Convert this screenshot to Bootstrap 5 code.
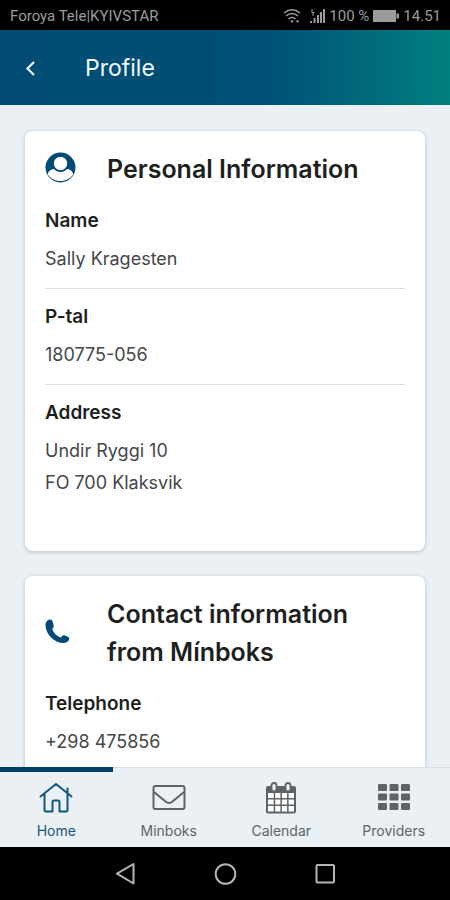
<!DOCTYPE html>
<html lang="en">
<head>
<meta charset="utf-8">
<meta name="viewport" content="width=device-width, initial-scale=1">
<title>Profile</title>
<link rel="stylesheet" href="https://cdn.jsdelivr.net/npm/bootstrap@5.3.0/dist/css/bootstrap.min.css">
<style>
  body { font-family: Inter, "Noto Sans", sans-serif; font-size: 18px; line-height: 32px; color: #444648; background: #ebf0f4; }
  svg { display: block; flex: none; }
  .status-bar { background: #000; color: #9b9b9b; font: 15px/20px Roboto, sans-serif; padding: 6px 9px 4px 10px; }
  .app-header { background: linear-gradient(90deg, #004c74 0%, #004f76 58%, #007f80 100%); color: #f2f8fa; padding: 19px 20px 18px; gap: 44px; }
  .app-header h1 { font-size: 23px; line-height: 38px; }
  .content { padding: 26px 25px 25px; gap: 25px; }
  .info-card { border: 0; border-radius: 8px; padding: 19px 20px 52px; box-shadow: 0 1px 4px rgba(40, 70, 90, .28); color: inherit; }
  .card-head { margin-bottom: 17px; }
  .head-icon { width: 62px; padding-bottom: 4px; color: #004a75; }
  h2, dt { color: #1d1f21; }
  .card-head h2 { font-size: 25px; line-height: 38px; font-weight: 600; }
  .field dt { font-size: 19px; font-weight: 600; margin-bottom: 6px; }
  .field + .field { border-top: 1px solid #dadee1; margin-top: 13px; padding-top: 12px; }
  .tab-bar { background: #ebf0f4; border-top: 1px solid #d8dee3; }
  .tab-link { color: #606366; font-size: 14px; line-height: 20px; padding: 10px 0 8px; gap: 5px; border-top: 5px solid transparent; margin-top: -1px; height: 80px; }
  .tab-link.current { color: #14577e; border-top-color: #003f69; }
  .system-bar { background: #000; color: #b5b5b5; padding: 13px 0 13px; gap: 73px; }
</style>
<script defer src="https://cdn.jsdelivr.net/npm/bootstrap@5.3.0/dist/js/bootstrap.bundle.min.js"></script>
</head>
<body class="d-flex flex-column vh-100 overflow-hidden">
  <div class="status-bar d-flex align-items-center">
    <span class="me-auto">Foroya Tele|KYIVSTAR</span>
    <svg class="me-2" width="18" height="16" viewBox="0 0 18 16" fill="none" stroke="currentColor" stroke-width="1.5" aria-hidden="true"><path d="M1 5Q9-1.500 17 5M3 8Q9 3 15 8M5.500 11Q9 8 12.500 11"/><path d="M7 12.500h4l-2 2.500zM12.500 12.500h4l-2 2.500z" fill="currentColor" stroke="none"/></svg>
    <svg width="16" height="16" viewBox="0 0 16 16" fill="currentColor" aria-hidden="true"><path d="M1 13h2v2H1zM4.500 10h2v5h-2zM8 7h2v8H8zM11 4h2v11h-2zM14 1h2v14h-2zM2.500 1h1v3h2v1h-1v3h-1V5h-1z"/></svg>
    <span class="ms-1">100 %</span>
    <svg class="mx-1" width="26" height="14" viewBox="0 0 26 14" aria-hidden="true"><path d="M0 1h23v12H0zM23.500 4.500H26v5h-2.500z" fill="currentColor"/></svg>
    <span>14.51</span>
  </div>

  <header class="app-header d-flex align-items-center">
    <button type="button" class="btn p-0 border-0 text-reset" aria-label="Back">
      <svg width="21" height="24" viewBox="0 0 21 24" fill="none" stroke="currentColor" stroke-width="2.200"><path d="M14 6L7.500 12.500l6.500 6.500"/></svg>
    </button>
    <h1 class="m-0 fw-normal">Profile</h1>
  </header>

  <main class="content d-flex flex-column flex-fill overflow-auto">
    <section class="info-card card flex-shrink-0">
      <div class="card-head d-flex align-items-center">
        <div class="head-icon flex-shrink-0">
          <svg width="31" height="31" viewBox="0 0 31 31" aria-hidden="true"><circle cx="15.500" cy="15.500" r="15" fill="currentColor"/><path d="M9 17C5 17.500 3 20 2.800 22.500c3 4.200 7.200 6.500 12.700 6.500s9.700-2.300 12.700-6.500C28 20 26 17.500 22 17c-4 4-9 4-13 0z" fill="#fff"/><circle cx="15.500" cy="11.500" r="7.500" fill="#fff" stroke="currentColor" stroke-width="1.500"/></svg>
        </div>
        <h2 class="m-0">Personal Information</h2>
      </div>
      <dl class="m-0">
        <div class="field"><dt>Name</dt><dd class="m-0">Sally Kragesten</dd></div>
        <div class="field"><dt>P-tal</dt><dd class="m-0">180775-056</dd></div>
        <div class="field"><dt>Address</dt><dd class="m-0">Undir Ryggi 10<br>FO 700 Klaksvik</dd></div>
      </dl>
    </section>

    <section class="info-card card flex-shrink-0">
      <div class="card-head d-flex align-items-center">
        <div class="head-icon flex-shrink-0">
          <svg width="25" height="25" viewBox="0 0 25 25" fill="currentColor" aria-hidden="true"><path d="M4.500.5C2 1.200.5 3.200.5 6.200.8 15 9 23.600 17.500 24c3.200.2 6-1.200 6.600-3.500.3-1.300-.2-2.200-1.200-2.700l-2.400-1.100c-1.500-.6-2.800-.4-3.700.8l-.9 1.200C12 17.200 8.700 14 7.200 9.900l.6-.7c.9-.9 1.100-1.800.8-3L7.700 2.700C7.100 1 6.100.2 4.500.5z"/></svg>
        </div>
        <h2 class="m-0">Contact information from Mínboks</h2>
      </div>
      <dl class="m-0">
        <div class="field"><dt>Telephone</dt><dd class="m-0">+298 475856</dd></div>
      </dl>
    </section>
  </main>

  <nav class="tab-bar" aria-label="Main">
    <div class="row g-0 row-cols-4 text-center">
      <div class="col"><a href="#" class="tab-link current d-flex flex-column align-items-center text-decoration-none" aria-current="page">
        <svg width="34" height="34" viewBox="0 0 34 34" fill="none" stroke="currentColor" stroke-width="2" stroke-linejoin="round" stroke-linecap="round" aria-hidden="true"><path d="M1.500 14.500L17 2l15.500 12.500M5.500 12v16q0 1.500 1.500 1.500h6.500V20q0-1.500 1.500-1.500h4q1.500 0 1.500 1.500v9.500H27q1.500 0 1.500-1.500V12M28.500 6.500v4.500"/></svg>
        <span>Home</span></a></div>
      <div class="col"><a href="#" class="tab-link d-flex flex-column align-items-center text-decoration-none">
        <svg width="34" height="34" viewBox="0 0 34 34" fill="none" stroke="currentColor" stroke-width="2" stroke-linejoin="round" aria-hidden="true"><rect x="1.500" y="4" width="31" height="23" rx="2"/><path d="M2 10l11.500 9.500q3.500 3 7 0L32 10"/></svg>
        <span>Minboks</span></a></div>
      <div class="col"><a href="#" class="tab-link d-flex flex-column align-items-center text-decoration-none">
        <svg width="34" height="34" viewBox="0 0 34 34" aria-hidden="true"><rect x="2" y="4" width="30" height="27.500" rx="2" fill="currentColor"/><path d="M4 11h5.700v5H4zM11.200 11h5.200v5h-5.200zM17.900 11h5.200v5h-5.200zM24.600 11h5.400v5h-5.400zM4 17.500h5.700v5H4zM11.200 17.500h5.200v5h-5.200zM17.900 17.500h5.200v5h-5.200zM24.600 17.500h5.400v5h-5.400zM4 24h5.700v5.500H4zM11.200 24h5.200v5.500h-5.200zM17.900 24h5.200v5.500h-5.200zM24.600 24h5.400v5.500h-5.400z" fill="#fff"/><g fill="#ebf0f4" stroke="currentColor" stroke-width="1.800"><rect x="7.500" y="1" width="5" height="8.500" rx="2.500"/><rect x="21.500" y="1" width="5" height="8.500" rx="2.500"/></g></svg>
        <span>Calendar</span></a></div>
      <div class="col"><a href="#" class="tab-link d-flex flex-column align-items-center text-decoration-none">
        <svg width="34" height="34" viewBox="0 0 34 34" fill="currentColor" aria-hidden="true"><rect x="1" y="2" width="9" height="7" rx="1"/><rect x="12.500" y="2" width="9" height="7" rx="1"/><rect x="24" y="2" width="9" height="7" rx="1"/><rect x="1" y="11.500" width="9" height="7" rx="1"/><rect x="12.500" y="11.500" width="9" height="7" rx="1"/><rect x="24" y="11.500" width="9" height="7" rx="1"/><rect x="1" y="21" width="9" height="7" rx="1"/><rect x="12.500" y="21" width="9" height="7" rx="1"/><rect x="24" y="21" width="9" height="7" rx="1"/></svg>
        <span>Providers</span></a></div>
    </div>
  </nav>

  <div class="system-bar d-flex justify-content-center">
    <button type="button" class="btn p-0 border-0 text-reset" aria-label="System back"><svg width="27" height="27" viewBox="0 0 27 27" fill="none" stroke="currentColor" stroke-width="2" stroke-linejoin="round"><path d="M21.500 4v19.500L5 13.700z"/></svg></button>
    <button type="button" class="btn p-0 border-0 text-reset" aria-label="System home"><svg width="27" height="27" viewBox="0 0 27 27" fill="none" stroke="currentColor" stroke-width="2"><circle cx="13.500" cy="14" r="9.800"/></svg></button>
    <button type="button" class="btn p-0 border-0 text-reset" aria-label="Recent apps"><svg width="27" height="27" viewBox="0 0 27 27" fill="none" stroke="currentColor" stroke-width="2"><rect x="4.500" y="5" width="17.500" height="17.500" rx="1"/></svg></button>
  </div>
</body>
</html>
